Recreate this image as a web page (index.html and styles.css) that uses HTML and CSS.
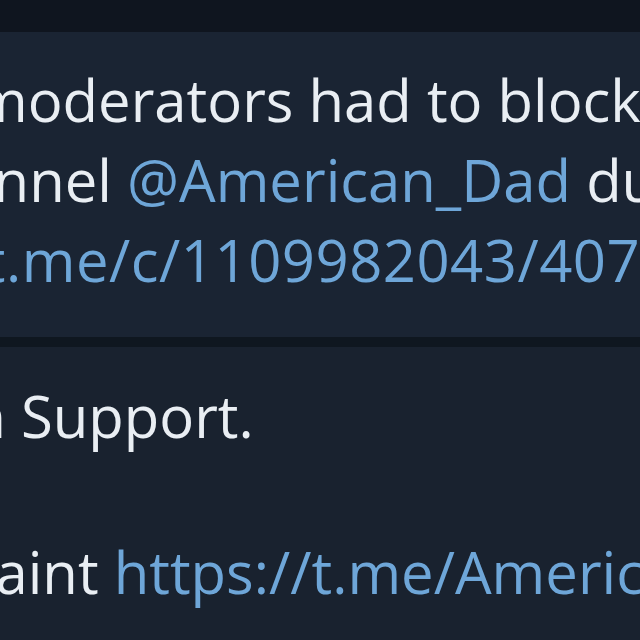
FILE: index.html
```html
<!DOCTYPE html>
<html lang="en">
<head>
  <meta charset="UTF-8">
  <title>Telegram</title>
  <link rel="stylesheet" href="styles.css">
</head>
<body>
  <div class="chat">
    <div class="top-bar"></div>

    <div class="message">
      <div class="line line-1">moderators had to block the</div>
      <div class="line line-2">channel <a class="link">@American_Dad</a> due to</div>
      <div class="line line-3"><a class="link">https://t.me/c/1109982043/4071</a></div>
    </div>

    <div class="separator"></div>

    <div class="message lower">
      <div class="line line-4">Telegram Support.</div>
      <div class="line blank">&nbsp;</div>
      <div class="line line-5">complaint <a class="link">https://t.me/American_Dad</a></div>
    </div>
  </div>
</body>
</html>
```

FILE: styles.css
```css
body {
  margin: 0;
  background-color: #19222f;
  font-family: 'Open Sans', 'Noto Sans', sans-serif;
  overflow: hidden;
}

.chat {
  width: 640px;
  height: 640px;
  overflow: hidden;
  display: flex;
  flex-direction: column;
}

.top-bar {
  height: 32px;
  background-color: #0f151f;
  flex-shrink: 0;
}

.message {
  background-color: #1a2433;
  color: #e9eef3;
  font-size: 58px;
  line-height: 80px;
  padding-top: 28px;
  height: 305px;
  box-sizing: border-box;
  flex-shrink: 0;
}

.message.lower {
  background-color: #19222f;
  height: auto;
  flex-grow: 1;
  padding-top: 30px;
  line-height: 78px;
}

.separator {
  height: 10px;
  background-color: #0f1720;
  flex-shrink: 0;
}

.line {
  white-space: nowrap;
}

.link {
  color: #6ea6d8;
  text-decoration: none;
}

.line-1 {
  margin-left: -26px;
}

.line-2 {
  margin-left: -102px;
}

.line-3 {
  margin-left: -217px;
  letter-spacing: 0.5px;
}

.line-4 {
  margin-left: -247px;
}

.line-5 {
  margin-left: -171px;
}
```
